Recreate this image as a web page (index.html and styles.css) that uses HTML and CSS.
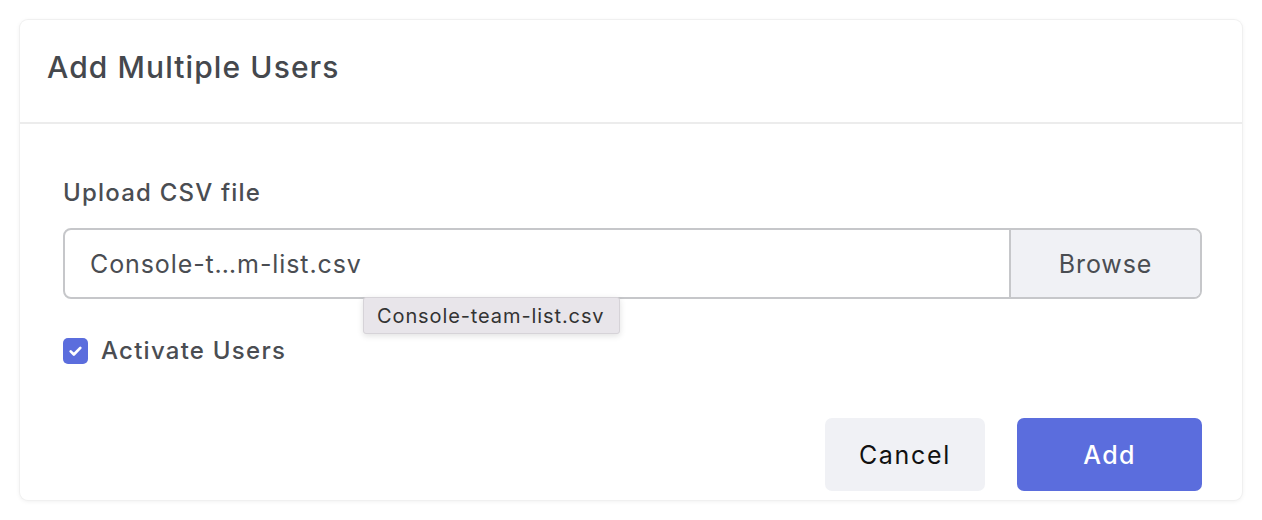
FILE: index.html
```html
<!DOCTYPE html>
<html lang="en">
<head>
<meta charset="utf-8">
<title>Add Multiple Users</title>
<link rel="stylesheet" href="styles.css">
</head>
<body>
<div class="page">
  <div class="card">
    <div class="card-header">
      <h1 class="title">Add Multiple Users</h1>
    </div>
    <div class="card-body">
      <div class="label">Upload CSV file</div>
      <div class="file-field">
        <div class="file-name">Console-t…m-list.csv</div>
        <div class="browse">Browse</div>
        <div class="tooltip">Console-team-list.csv</div>
      </div>
      <div class="check-row">
        <span class="checkbox">
          <svg viewBox="0 0 26 26" width="26" height="26"><path d="M8 13.4l3.3 3.2 6.7-6.8" fill="none" stroke="#fff" stroke-width="2.8" stroke-linecap="round" stroke-linejoin="round"/></svg>
        </span>
        <span class="check-label">Activate Users</span>
      </div>
      <div class="footer">
        <button class="btn btn-cancel">Cancel</button>
        <button class="btn btn-add">Add</button>
      </div>
    </div>
  </div>
</div>
</body>
</html>
```
FILE: styles.css
```css
* { box-sizing: border-box; }
html, body { margin: 0; background: #ffffff; }
body { font-family: Inter, "Noto Sans", sans-serif; color: #474a4f; }
.page { padding: 20px; }
.card {
  width: 1222px;
  height: 480px;
  background: #fff;
  border-radius: 8px;
  box-shadow: 0 0 0 1px #f0f0f0, 0 1px 5px rgba(0,0,0,0.08);
  display: flex;
  flex-direction: column;
}
.card-header {
  height: 104px;
  border-bottom: 2px solid #ececec;
  display: flex;
  align-items: center;
  padding-left: 27px;
  padding-bottom: 8px;
}
.title {
  margin: 0;
  font-size: 30px;
  font-weight: 500;
  color: #45484d;
  letter-spacing: 1.1px;
}
.card-body {
  padding: 53px 40px 0 43px;
  display: flex;
  flex-direction: column;
}
.label {
  font-size: 24px;
  font-weight: 500;
  color: #4a4d52;
  line-height: 32px;
  letter-spacing: 1.2px;
}
.file-field {
  position: relative;
  margin-top: 19px;
  height: 71px;
  border: 2px solid #c6c7ca;
  border-radius: 8px;
  display: flex;
}
.file-name {
  flex: 1;
  display: flex;
  align-items: center;
  padding-left: 25px;
  font-size: 25px;
  letter-spacing: 0.9px;
  color: #4a4d52;
}
.browse {
  width: 191px;
  background: #f0f1f5;
  border-left: 2px solid #c6c7ca;
  border-radius: 0 6px 6px 0;
  display: flex;
  align-items: center;
  justify-content: center;
  font-size: 25px;
  letter-spacing: 0.9px;
  color: #4a4d52;
}
.tooltip {
  position: absolute;
  left: 298px;
  top: 67px;
  width: 257px;
  height: 37px;
  background: #e8e5ea;
  border: 1px solid #d6d3d8;
  border-radius: 3px;
  box-shadow: 0 2px 6px rgba(0,0,0,0.12);
  font-family: Inter, "Noto Sans", sans-serif;
  font-size: 20px;
  letter-spacing: 0.9px;
  color: #333;
  display: flex;
  align-items: center;
  padding-left: 13px;
}
.check-row {
  margin-top: 37px;
  display: flex;
  align-items: center;
  gap: 13px;
}
.checkbox {
  width: 25px;
  height: 26px;
  background: #5b6ddd;
  border-radius: 5px;
  display: inline-flex;
}
.check-label {
  font-size: 24px;
  font-weight: 500;
  color: #4a4d52;
  letter-spacing: 1.25px;
}
.footer {
  margin-top: 53px;
  display: flex;
  justify-content: flex-end;
  gap: 32px;
}
.btn {
  height: 73px;
  border: none;
  border-radius: 7px;
  font-family: Inter, "Noto Sans", sans-serif;
  font-size: 25px;
  cursor: pointer;
}
.btn-cancel {
  width: 160px;
  background: #f0f1f5;
  color: #111;
  letter-spacing: 1.7px;
}
.btn-add {
  width: 185px;
  background: #5b6ddd;
  color: #fff;
  font-weight: 500;
  letter-spacing: 1.3px;
}
```
